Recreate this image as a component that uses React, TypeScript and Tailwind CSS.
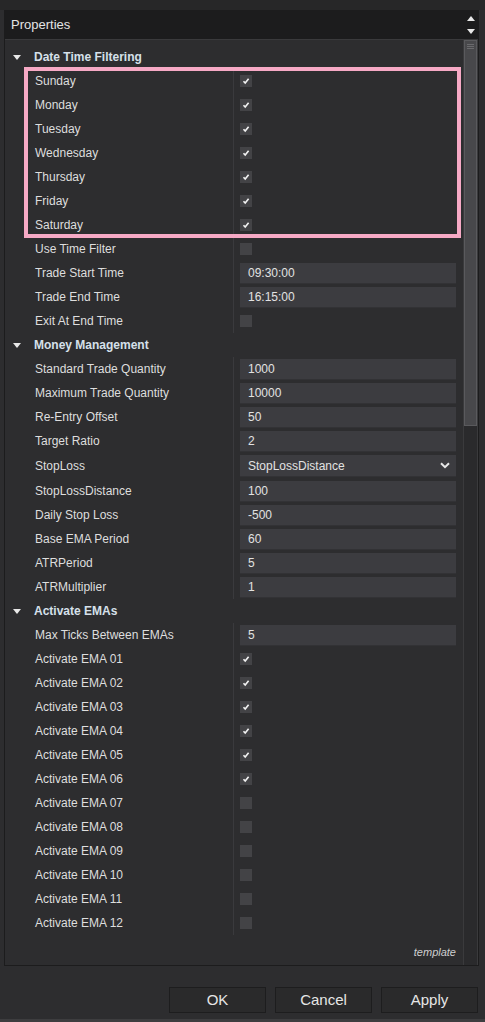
import React from 'react';

type Row =
    | { kind: 'cat'; label: string }
    | { kind: 'check'; label: string; on: boolean }
    | { kind: 'text'; label: string; value: string }
    | { kind: 'select'; label: string; value: string };

const days = ['Sunday', 'Monday', 'Tuesday', 'Wednesday', 'Thursday', 'Friday', 'Saturday'];

const afterDays: Row[] = [
    { kind: 'check', label: 'Use Time Filter', on: false },
    { kind: 'text', label: 'Trade Start Time', value: '09:30:00' },
    { kind: 'text', label: 'Trade End Time', value: '16:15:00' },
    { kind: 'check', label: 'Exit At End Time', on: false },
    { kind: 'cat', label: 'Money Management' },
    { kind: 'text', label: 'Standard Trade Quantity', value: '1000' },
    { kind: 'text', label: 'Maximum Trade Quantity', value: '10000' },
    { kind: 'text', label: 'Re-Entry Offset', value: '50' },
    { kind: 'text', label: 'Target Ratio', value: '2' },
    { kind: 'select', label: 'StopLoss', value: 'StopLossDistance' },
    { kind: 'text', label: 'StopLossDistance', value: '100' },
    { kind: 'text', label: 'Daily Stop Loss', value: '-500' },
    { kind: 'text', label: 'Base EMA Period', value: '60' },
    { kind: 'text', label: 'ATRPeriod', value: '5' },
    { kind: 'text', label: 'ATRMultiplier', value: '1' },
    { kind: 'cat', label: 'Activate EMAs' },
    { kind: 'text', label: 'Max Ticks Between EMAs', value: '5' },
    ...['01', '02', '03', '04', '05', '06', '07', '08', '09', '10', '11', '12'].map(
        (n, i): Row => ({ kind: 'check', label: `Activate EMA ${n}`, on: i < 6 })
    ),
];

function Triangle({ up }: { up?: boolean }) {
    return (
        <svg width="8" height="5" viewBox="0 0 8 5">
            <path d={up ? 'M0 5 L4 0 L8 5 Z' : 'M0 0 L8 0 L4 5 Z'} fill="#e8e8e8" />
        </svg>
    );
}

function CheckBox({ on }: { on: boolean }) {
    return (
        <div className="w-3 h-3 bg-[#434346] flex items-center justify-center">
            {on && (
                <svg width="8" height="8" viewBox="0 0 8 8">
                    <path d="M1.5 4.2 L3.2 6 L6.6 1.8" stroke="#f2f2f2" strokeWidth="1.6" fill="none" />
                </svg>
            )}
        </div>
    );
}

function PropRow({ row }: { row: Row }) {
    if (row.kind === 'cat') {
        return (
            <div className="h-6 flex items-center pl-[8px] gap-[13px]">
                <Triangle />
                <span className="font-bold text-[12px] text-[#d6e0ea]">{row.label}</span>
            </div>
        );
    }
    return (
        <div className={row.kind === 'select' ? 'h-[26px] flex' : 'h-6 flex'}>
            <div className="w-[229px] pl-[30px] flex items-center border-r border-[#3a3a3d] text-[12px] text-[#dedede]">
                {row.label}
            </div>
            <div className="flex-1 pl-[6px] pr-[7px] flex items-center">
                {row.kind === 'check' && <CheckBox on={row.on} />}
                {row.kind === 'text' && (
                    <div className="w-full h-[21px] bg-[#3c3c40] border-b border-[#323235] pl-2 flex items-center text-[12px] text-[#e2e2e2]">
                        {row.value}
                    </div>
                )}
                {row.kind === 'select' && (
                    <div className="w-full h-[22px] bg-[#3c3c40] border-b border-[#323235] pl-2 pr-[6px] flex items-center justify-between text-[12px] text-[#e2e2e2]">
                        <span>{row.value}</span>
                        <svg width="10" height="7" viewBox="0 0 10 7">
                            <path d="M1 1.2 L5 5.2 L9 1.2" stroke="#e8e8e8" strokeWidth="2" fill="none" />
                        </svg>
                    </div>
                )}
            </div>
        </div>
    );
}

export default function App() {
    return (
        <div
            className="w-[485px] h-[1022px] bg-[#2d2d2f] flex flex-col"
            style={{ fontFamily: '"Liberation Sans", Arial, sans-serif' }}
        >
            <div className="h-[10px] bg-[#272728]" />

            {/* Properties panel */}
            <div className="ml-[4px] mr-[6px] h-[956px] border border-[#1c1c1d] flex flex-col">
                {/* Header */}
                <div className="h-[29px] flex bg-[#1c1c1d] border-b border-[#3a3a3c]">
                    <div className="flex-1 pl-[6px] flex items-center text-[13px] text-[#e4e4e4]">Properties</div>
                    <div className="w-[15px] flex flex-col items-center justify-center gap-[8px]">
                        <Triangle up />
                        <Triangle />
                    </div>
                </div>

                {/* Body */}
                <div className="flex-1 flex">
                    <div className="flex-1 flex flex-col pt-[5px]">
                        <PropRow row={{ kind: 'cat', label: 'Date Time Filtering' }} />
                        <div className="relative">
                            {days.map(d => (
                                <PropRow key={d} row={{ kind: 'check', label: d, on: true }} />
                            ))}
                            <span className="absolute left-[19px] right-[2px] top-[-2px] bottom-[-1px] border-4 border-[#f6a9c5] pointer-events-none" />
                        </div>
                        {afterDays.map(r => (
                            <PropRow key={r.label} row={r} />
                        ))}
                        <div className="flex-1 flex items-center justify-end pr-[7px] pt-[4px]">
                            <span className="italic text-[11px] text-[#cfcfcf]">template</span>
                        </div>
                    </div>

                    {/* Scrollbar */}
                    <div className="w-[15px] bg-[#2a2a2c] border-x border-[#3a3a3c] flex flex-col">
                        <div className="h-[386px] bg-[#48484b] border border-[#5a5a5d] flex flex-col items-center pt-[3px] gap-[1px]">
                            <div className="w-[7px] h-px bg-[#6a6a6d]" />
                            <div className="w-[7px] h-px bg-[#6a6a6d]" />
                            <div className="w-[7px] h-px bg-[#6a6a6d]" />
                        </div>
                    </div>
                </div>
            </div>

            {/* Buttons */}
            <div className="flex justify-end gap-[9px] pr-[7px] mt-[21px]">
                {['OK', 'Cancel', 'Apply'].map(b => (
                    <div
                        key={b}
                        className="w-[97px] h-[26px] bg-[#2a2a2b] border border-[#1d1d1e] flex items-center justify-center text-[15px] text-[#e6e6e6]"
                    >
                        {b}
                    </div>
                ))}
            </div>
            <div className="flex-1" />
            <div className="h-[3px] bg-[#3d3d3f]" />
        </div>
    );
}
